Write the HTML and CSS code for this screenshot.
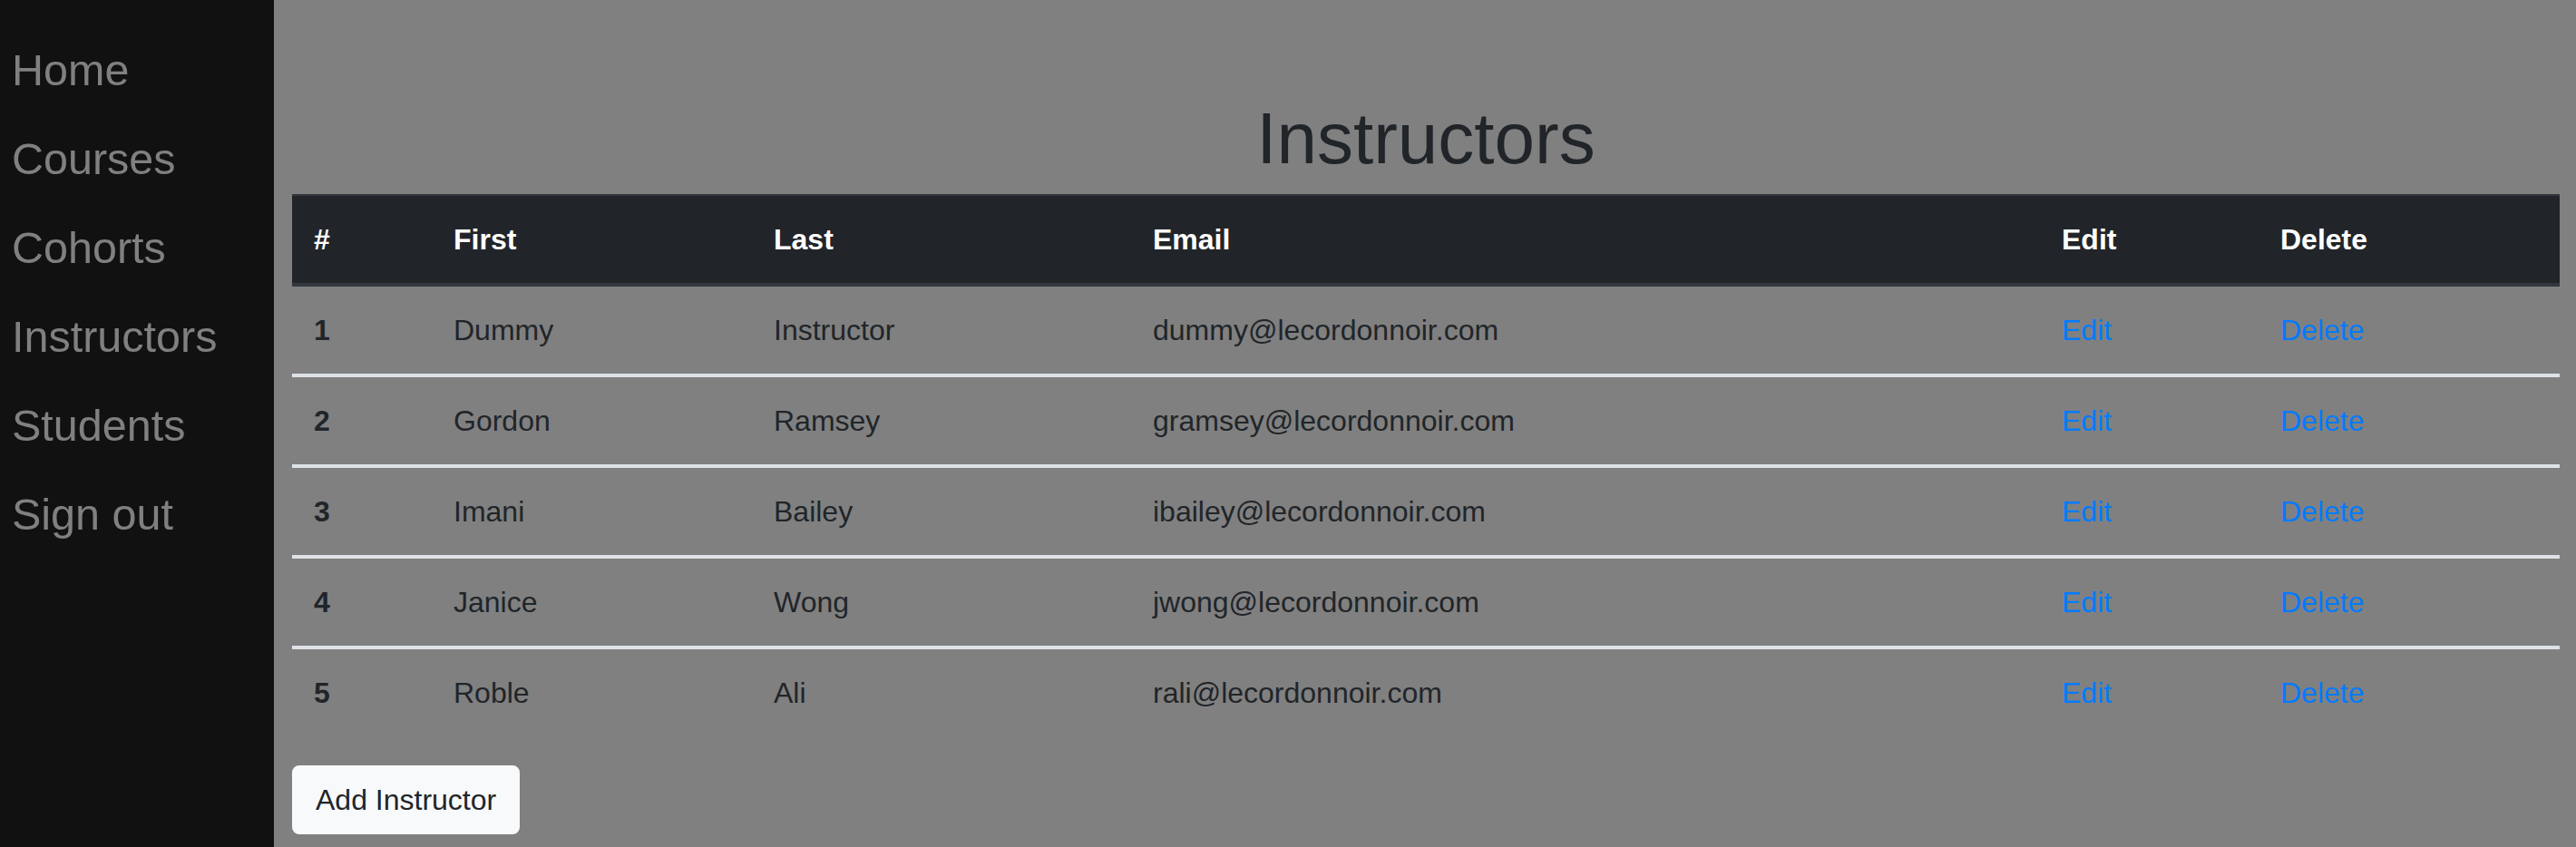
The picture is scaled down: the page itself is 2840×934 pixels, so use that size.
FILE: index.html
```html
<!DOCTYPE html>
<html lang="en">
<head>
<meta charset="utf-8">
<title>Instructors</title>
<link rel="stylesheet" href="styles.css">
</head>
<body>
<div class="layout">
  <nav class="sidebar">
    <a class="nav-link" href="#">Home</a>
    <a class="nav-link" href="#">Courses</a>
    <a class="nav-link" href="#">Cohorts</a>
    <a class="nav-link" href="#">Instructors</a>
    <a class="nav-link" href="#">Students</a>
    <a class="nav-link" href="#">Sign out</a>
  </nav>
  <main class="main">
    <h1 class="title">Instructors</h1>
    <table class="table">
      <thead>
        <tr>
          <th class="c-num">#</th>
          <th class="c-first">First</th>
          <th class="c-last">Last</th>
          <th class="c-email">Email</th>
          <th class="c-edit">Edit</th>
          <th class="c-del">Delete</th>
        </tr>
      </thead>
      <tbody>
        <tr>
          <th class="row-num">1</th>
          <td>Dummy</td>
          <td>Instructor</td>
          <td>dummy@lecordonnoir.com</td>
          <td><a class="link" href="#">Edit</a></td>
          <td><a class="link" href="#">Delete</a></td>
        </tr>
        <tr>
          <th class="row-num">2</th>
          <td>Gordon</td>
          <td>Ramsey</td>
          <td>gramsey@lecordonnoir.com</td>
          <td><a class="link" href="#">Edit</a></td>
          <td><a class="link" href="#">Delete</a></td>
        </tr>
        <tr>
          <th class="row-num">3</th>
          <td>Imani</td>
          <td>Bailey</td>
          <td>ibailey@lecordonnoir.com</td>
          <td><a class="link" href="#">Edit</a></td>
          <td><a class="link" href="#">Delete</a></td>
        </tr>
        <tr>
          <th class="row-num">4</th>
          <td>Janice</td>
          <td>Wong</td>
          <td>jwong@lecordonnoir.com</td>
          <td><a class="link" href="#">Edit</a></td>
          <td><a class="link" href="#">Delete</a></td>
        </tr>
        <tr>
          <th class="row-num">5</th>
          <td>Roble</td>
          <td>Ali</td>
          <td>rali@lecordonnoir.com</td>
          <td><a class="link" href="#">Edit</a></td>
          <td><a class="link" href="#">Delete</a></td>
        </tr>
      </tbody>
    </table>
    <button class="btn" type="button">Add Instructor</button>
  </main>
</div>
</body>
</html>
```
FILE: styles.css
```css
html, body {
  margin: 0;
  padding: 0;
  height: 100%;
}
body {
  font-family: "Liberation Sans", Arial, Helvetica, sans-serif;
  color: #212529;
  background: #808080;
}
.layout {
  display: flex;
  min-height: 934px;
}
.sidebar {
  width: 302px;
  flex: 0 0 302px;
  background: #111111;
  display: flex;
  flex-direction: column;
  padding-top: 28px;
  box-sizing: border-box;
}
.nav-link {
  display: block;
  color: #808080;
  text-decoration: none;
  font-size: 48.5px;
  line-height: 72px;
  padding: 13px 13px;
}
.main {
  flex: 1;
  min-width: 0;
  background: #808080;
  padding: 105px 18px 0 20px;
  box-sizing: border-box;
}
.title {
  margin: 0 0 13px;
  text-align: center;
  font-size: 80px;
  line-height: 96px;
  font-weight: 400;
  color: #212529;
}
.table {
  width: 2500px;
  border-collapse: collapse;
  table-layout: fixed;
  margin-bottom: 32px;
  font-size: 32px;
  line-height: 48px;
}
.table th, .table td {
  text-align: left;
  padding: 24px 24px;
  vertical-align: top;
}
.table thead th {
  background: #212529;
  color: #ffffff;
  font-weight: 700;
  border-top: 2px solid #32383e;
  border-bottom: 4px solid #32383e;
}
.table tbody tr + tr th,
.table tbody tr + tr td {
  border-top: 4px solid #dee2e6;
}
.row-num {
  font-weight: 700;
}
.c-num { width: 106px; }
.c-first { width: 305px; }
.c-last { width: 370px; }
.c-email { width: 954px; }
.c-edit { width: 193px; }
.c-del { width: 284px; }
.link {
  color: #007bff;
  text-decoration: none;
}
.btn {
  display: inline-block;
  font-family: "Liberation Sans", Arial, Helvetica, sans-serif;
  font-size: 32px;
  line-height: 48px;
  padding: 12px 24px;
  border: 2px solid #f8f9fa;
  border-radius: 8px;
  background: #f8f9fa;
  color: #212529;
  cursor: pointer;
}
```
